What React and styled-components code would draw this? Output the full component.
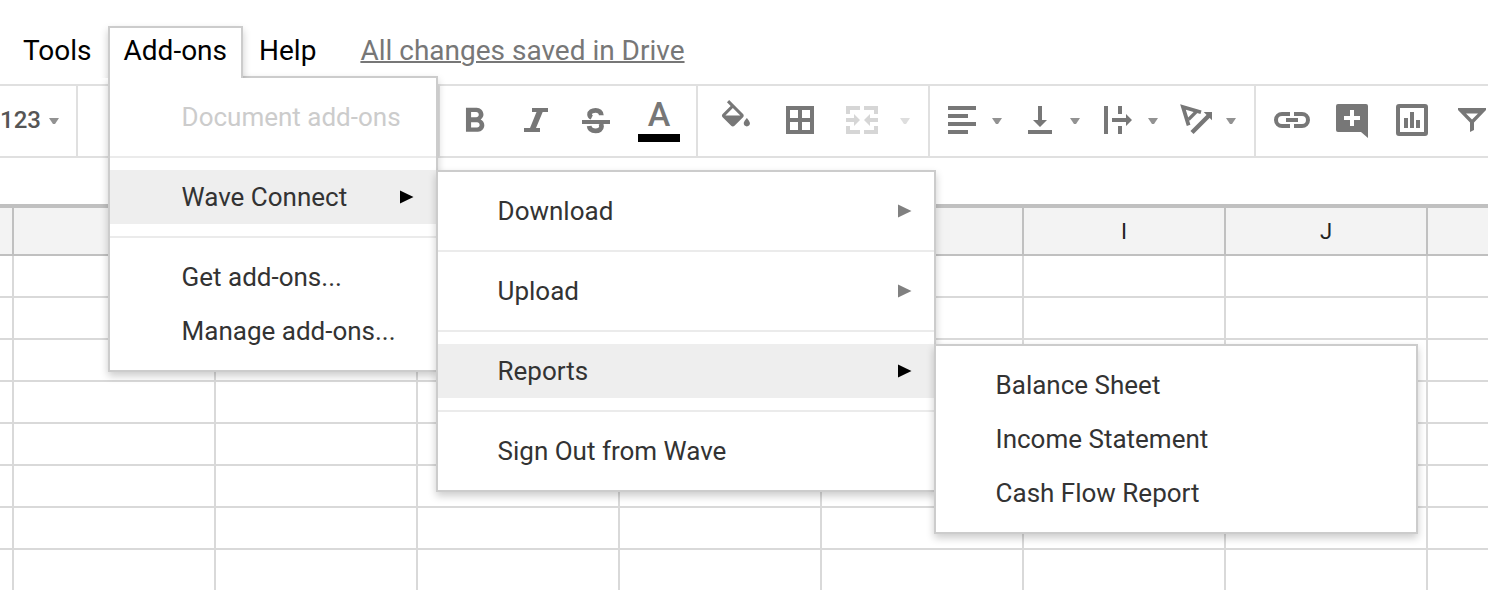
import React from "react";
import styled, { createGlobalStyle, css } from "styled-components";
import { MdFormatBold } from "react-icons/md";

const GlobalStyle = createGlobalStyle`
  *, *::before, *::after { box-sizing: border-box; }
  body { margin: 0; background: #fff; font-family: Roboto, "Liberation Sans", sans-serif; font-size: 26px; }
  button, input { font: inherit; color: inherit; }
`;

const Page = styled.div`
  display: flex;
  flex-direction: column;
  height: 100vh;
  overflow: hidden;
`;

const MenuBar = styled.nav`
  display: flex;
  align-items: flex-start;
  height: 84px;
  padding: 26px 0 0 7px;
  flex-shrink: 0;
`;

const MenuSlot = styled.div`
  position: relative;
`;

const MenuTab = styled.button`
  display: block;
  height: 52px;
  padding: 0 14px 4px;
  border: 2px solid transparent;
  border-bottom: 0;
  background: #fff;
  color: #000;
  font-size: 28px;
  line-height: 46px;
  white-space: nowrap;
  ${(p) =>
    p.$open &&
    css`
      position: relative;
      z-index: 3;
      border-color: #ccc;
      box-shadow: 0 4px 8px rgba(0, 0, 0, 0.2);
      clip-path: inset(-8px -8px 0 -8px);
    `}
`;

const SaveStatus = styled.a`
  margin-left: 28px;
  color: #777;
  font-size: 28px;
  line-height: 50px;
  white-space: nowrap;
  text-decoration: underline;
  text-decoration-thickness: 2px;
`;

const Menu = styled.ul`
  position: absolute;
  z-index: 2;
  top: ${(p) => (p.$sub ? "0" : "50px")};
  left: ${(p) => (p.$sub ? "100%" : "0")};
  width: ${(p) => p.$width}px;
  margin: 0;
  padding: 12px 0;
  list-style: none;
  background: #fff;
  border: 2px solid #ccc;
  box-shadow: 0 4px 8px rgba(0, 0, 0, 0.2);
`;

const MenuRow = styled.li`
  position: relative;
`;

const MenuItem = styled.button`
  display: flex;
  align-items: center;
  justify-content: space-between;
  width: 100%;
  height: 54px;
  padding: 0 22px 0 ${(p) => (p.$indent ? "72px" : "60px")};
  border: 0;
  background: ${(p) => (p.$active ? "#eee" : "transparent")};
  color: #333;
  text-align: left;
  white-space: nowrap;

  &:disabled { color: #ccc; }
`;

const Separator = styled.li`
  height: 2px;
  margin: 12px 0;
  background: #ebebeb;
`;

const Toolbar = styled.div`
  display: flex;
  height: 74px;
  flex-shrink: 0;
  border-top: 2px solid #e0e0e0;
  border-bottom: 2px solid #e0e0e0;
`;

const Group = styled.div`
  display: flex;
  align-items: center;
  flex-shrink: 0;
  gap: ${(p) => p.$gap || 24}px;
  padding: 0 ${(p) => p.$right ?? 18}px 2px ${(p) => p.$left ?? 18}px;
  border-right: 2px solid #e0e0e0;
  ${(p) => p.$span && `width: ${p.$span}px;`}
  &:last-child { border-right: 0; }
`;

const Tool = styled.button`
  display: flex;
  align-items: center;
  gap: ${(p) => p.$gap || 12}px;
  padding: 0;
  border: 0;
  background: none;
  color: #777;

  &:disabled { color: #d6d6d6; }
`;

const FormatLabel = styled.span`
  color: #555;
  font-size: 24px;
  font-weight: 500;
`;

const TextColor = styled.span`
  display: flex;
  flex-direction: column;
  align-items: center;
  width: 42px;
  height: 44px;
  border-bottom: 8px solid #000;
  font-size: 34px;
  font-weight: 500;
  line-height: 32px;
`;

const Glyph = styled.svg`
  display: block;
  width: 36px;
  height: 36px;
  overflow: visible;
  fill: currentColor;
`;

const CaretShape = styled.svg`
  display: block;
  width: 10px;
  height: 8px;
  fill: currentColor;
  opacity: 0.8;
`;

const ArrowShape = styled.svg`
  display: block;
  width: 14px;
  height: 14px;
  fill: ${(p) => (p.$active ? "#000" : "#808080")};
`;

const FormulaInput = styled.input`
  height: 46px;
  width: 100%;
  flex-shrink: 0;
  padding: 0 14px;
  border: 0;
  background: transparent;
`;

const SheetArea = styled.div`
  flex: 1;
  min-height: 0;
  overflow: hidden;
  border-top: 4px solid #c0c0c0;
`;

const Sheet = styled.table`
  width: 1630px;
  table-layout: fixed;
  border-collapse: separate;
  border-spacing: 0;
`;

const Column = styled.col`
  width: ${(p) => (p.$edge ? 14 : 202)}px;
`;

const HeadCell = styled.th`
  height: 48px;
  padding: 0;
  background: #f3f3f3;
  border-right: 2px solid #c0c0c0;
  border-bottom: 2px solid #c0c0c0;
  color: #222;
  font-size: 22px;
  font-weight: 400;
`;

const Cell = styled.td`
  height: 42px;
  padding: 0;
  border-right: 2px solid #d9d9d9;
  border-bottom: 2px solid #d9d9d9;
`;

const Icon = ({ children }) => (
  <Glyph viewBox="0 0 36 36" aria-hidden="true">
    {children}
  </Glyph>
);

const Caret = () => (
  <CaretShape viewBox="0 0 10 8" aria-hidden="true">
    <path d="M0 2H10L6 8H4Z" />
  </CaretShape>
);

const SubArrow = ({ active }) => (
  <ArrowShape $active={active} viewBox="0 0 14 14" aria-hidden="true">
    <path d="M0 .5L13.5 7L0 13.5Z" />
  </ArrowShape>
);

const icons = {
  bold: <MdFormatBold x="-4" y="-1" size="41" />,
  italic: <path d="M14 6H30V10H24.7L18 26H22V30H6V26H12L18.5 10H14Z" />,
  strike: (
    <>
      <path d="M4 18H32V22H4Z" />
      <g fill="none" stroke="currentColor" strokeWidth="4.8">
        <path d="M23.3 13.2C23.3 10 20.8 8.3 17.6 8.3C14 8.3 11.6 10 11.6 12.4C11.6 13.8 12.4 14.7 13.8 15.4" />
        <path d="M11.2 24C11.5 27.2 14 28.8 17.6 28.8C21.1 28.8 23.5 27.2 23.5 24.6C23.5 23.4 23.3 22.6 22.7 21.6" />
      </g>
    </>
  ),
  fill: (
    <path
      transform="translate(-4.7 -2) scale(1.555)"
      d="M16.56 8.94L7.62 0 6.21 1.41l2.38 2.38-5.15 5.15c-.59.59-.59 1.54 0 2.12l5.5 5.5c.29.29.68.44 1.06.44s.77-.15 1.06-.44l5.5-5.5c.59-.58.59-1.53 0-2.12zM5.21 10L10 5.21 14.79 10H5.21zM19 11.5s-2 2.17-2 3.5c0 1.1.9 2 2 2s2-.9 2-2c0-1.33-2-3.5-2-3.5z"
    />
  ),
  borders: <path fillRule="evenodd" d="M4 4H32V32H4ZM8 8V16H16V8ZM20 8V16H28V8ZM8 20V28H16V20ZM20 20V28H28V20Z" />,
  merge: (
    <path d="M4 4H18V8H8V12H4ZM22 4H36V12H32V8H22ZM4 24H8V28H18V32H4ZM32 24H36V32H22V28H32ZM4 16H12V12L18 18L12 24V20H4ZM36 16H28V12L22 18L28 24V20H36Z" />
  ),
  align: <path d="M4 4H32V8H4ZM4 12H24V16H4ZM4 20H32V24H4ZM4 28H24V32H4Z" />,
  bottom: <path d="M16 4H20V18H25L18 25L11 18H16ZM6 28H30V32H6Z" />,
  wrap: <path d="M4 4H8V32H4ZM18 4H22V12H18ZM18 24H22V32H18ZM12 16H26V12L32 18L26 24V20H12Z" />,
  rotate: (
    <>
      <g fill="none" stroke="currentColor">
        <path strokeWidth="3.8" d="M23 10.3L5 5L10.6 23.4" />
        <path strokeWidth="3.2" d="M18.5 9.5L10.5 17.5" />
        <path strokeWidth="4.4" d="M14 30.5L31 13.5" />
      </g>
      <path d="M25.7 10H34V18.3Z" />
    </>
  ),
  link: (
    <>
      <path fill="none" stroke="currentColor" strokeWidth="4" d="M16 12H8A6 6 0 0 0 8 24H16M20 12H28A6 6 0 0 1 28 24H20" />
      <path d="M12 16H24V20H12Z" />
    </>
  ),
  comment: (
    <path
      fillRule="evenodd"
      d="M4 2H32A2 2 0 0 1 34 4V36L27 30H4A2 2 0 0 1 2 28V4A2 2 0 0 1 4 2ZM16 8V14H10V18H16V24H20V18H26V14H20V8Z"
    />
  ),
  chart: (
    <>
      <rect x="4" y="4" width="28" height="28" rx="1" fill="none" stroke="currentColor" strokeWidth="4" />
      <path d="M10 16H14V26H10ZM16 10H20V26H16ZM22 18H26V26H22Z" />
    </>
  ),
  filter: <path fillRule="evenodd" d="M4 6H32V8L20 20.5V28L16 30V20.5L4 8ZM12 11.5L18 17.5L24 11.5Z" />,
};

const ToolButton = ({ name, label, caret, ...rest }) => (
  <Tool type="button" aria-label={label} {...rest}>
    <Icon>{icons[name]}</Icon>
    {caret && <Caret />}
  </Tool>
);

const reports = [{ label: "Balance Sheet" }, { label: "Income Statement" }, { label: "Cash Flow Report" }];

const wave = [
  { label: "Download", arrow: true },
  "-",
  { label: "Upload", arrow: true },
  "-",
  { label: "Reports", arrow: true, items: reports, width: 484 },
  "-",
  { label: "Sign Out from Wave" },
];

const addOns = [
  { label: "Document add-ons", disabled: true },
  "-",
  { label: "Wave Connect", arrow: true, items: wave, width: 500 },
  "-",
  { label: "Get add-ons..." },
  { label: "Manage add-ons..." },
];

const MenuList = ({ items, width, sub }) => (
  <Menu role="menu" $sub={sub} $width={width}>
    {items.map((item, i) =>
      item === "-" ? (
        <Separator key={i} role="separator" />
      ) : (
        <MenuRow key={item.label} role="none">
          <MenuItem type="button" role="menuitem" disabled={item.disabled} $active={!!item.items} $indent={!sub}>
            {item.label}
            {item.arrow && <SubArrow active={!!item.items} />}
          </MenuItem>
          {item.items && <MenuList items={item.items} width={item.width} sub />}
        </MenuRow>
      )
    )}
  </Menu>
);

const columns = ["", "", "", "", "", "", "I", "J", ""];
const rows = [1, 2, 3, 4, 5, 6, 7, 8];

export default function App() {
  return (
    <Page>
      <GlobalStyle />
      <MenuBar>
        <MenuTab type="button">Tools</MenuTab>
        <MenuSlot>
          <MenuTab type="button" $open aria-expanded="true">
            Add-ons
          </MenuTab>
          <MenuList items={addOns} width={330} />
        </MenuSlot>
        <MenuTab type="button">Help</MenuTab>
        <SaveStatus href="#">All changes saved in Drive</SaveStatus>
      </MenuBar>

      <Toolbar role="toolbar">
        <Group $left={0} $span={78}>
          <Tool type="button" $gap={8}>
            <FormatLabel>123</FormatLabel>
            <Caret />
          </Tool>
        </Group>
        <Group $span={362} />
        <Group $right={16}>
          <ToolButton name="bold" label="Bold" />
          <ToolButton name="italic" label="Italic" />
          <ToolButton name="strike" label="Strikethrough" />
          <Tool type="button" aria-label="Text color">
            <TextColor>A</TextColor>
          </Tool>
        </Group>
        <Group $left={24}>
          <ToolButton name="fill" label="Fill color" />
          <ToolButton name="borders" label="Borders" />
          <ToolButton name="merge" label="Merge cells" caret disabled $gap={22} />
        </Group>
        <Group $left={14} $gap={20}>
          <ToolButton name="align" label="Horizontal align" caret />
          <ToolButton name="bottom" label="Vertical align" caret />
          <ToolButton name="wrap" label="Text wrapping" caret />
          <ToolButton name="rotate" label="Text rotation" caret />
        </Group>
        <Group>
          <ToolButton name="link" label="Insert link" />
          <ToolButton name="comment" label="Insert comment" />
          <ToolButton name="chart" label="Insert chart" />
          <ToolButton name="filter" label="Filter" />
        </Group>
      </Toolbar>

      <FormulaInput aria-label="Formula" />

      <SheetArea>
        <Sheet>
          <colgroup>
            {columns.map((c, i) => (
              <Column key={i} $edge={i === 0} />
            ))}
          </colgroup>
          <thead>
            <tr>
              {columns.map((c, i) => (
                <HeadCell key={i} scope="col">
                  {c}
                </HeadCell>
              ))}
            </tr>
          </thead>
          <tbody>
            {rows.map((r) => (
              <tr key={r}>
                {columns.map((c, i) => (
                  <Cell key={i} />
                ))}
              </tr>
            ))}
          </tbody>
        </Sheet>
      </SheetArea>
    </Page>
  );
}
